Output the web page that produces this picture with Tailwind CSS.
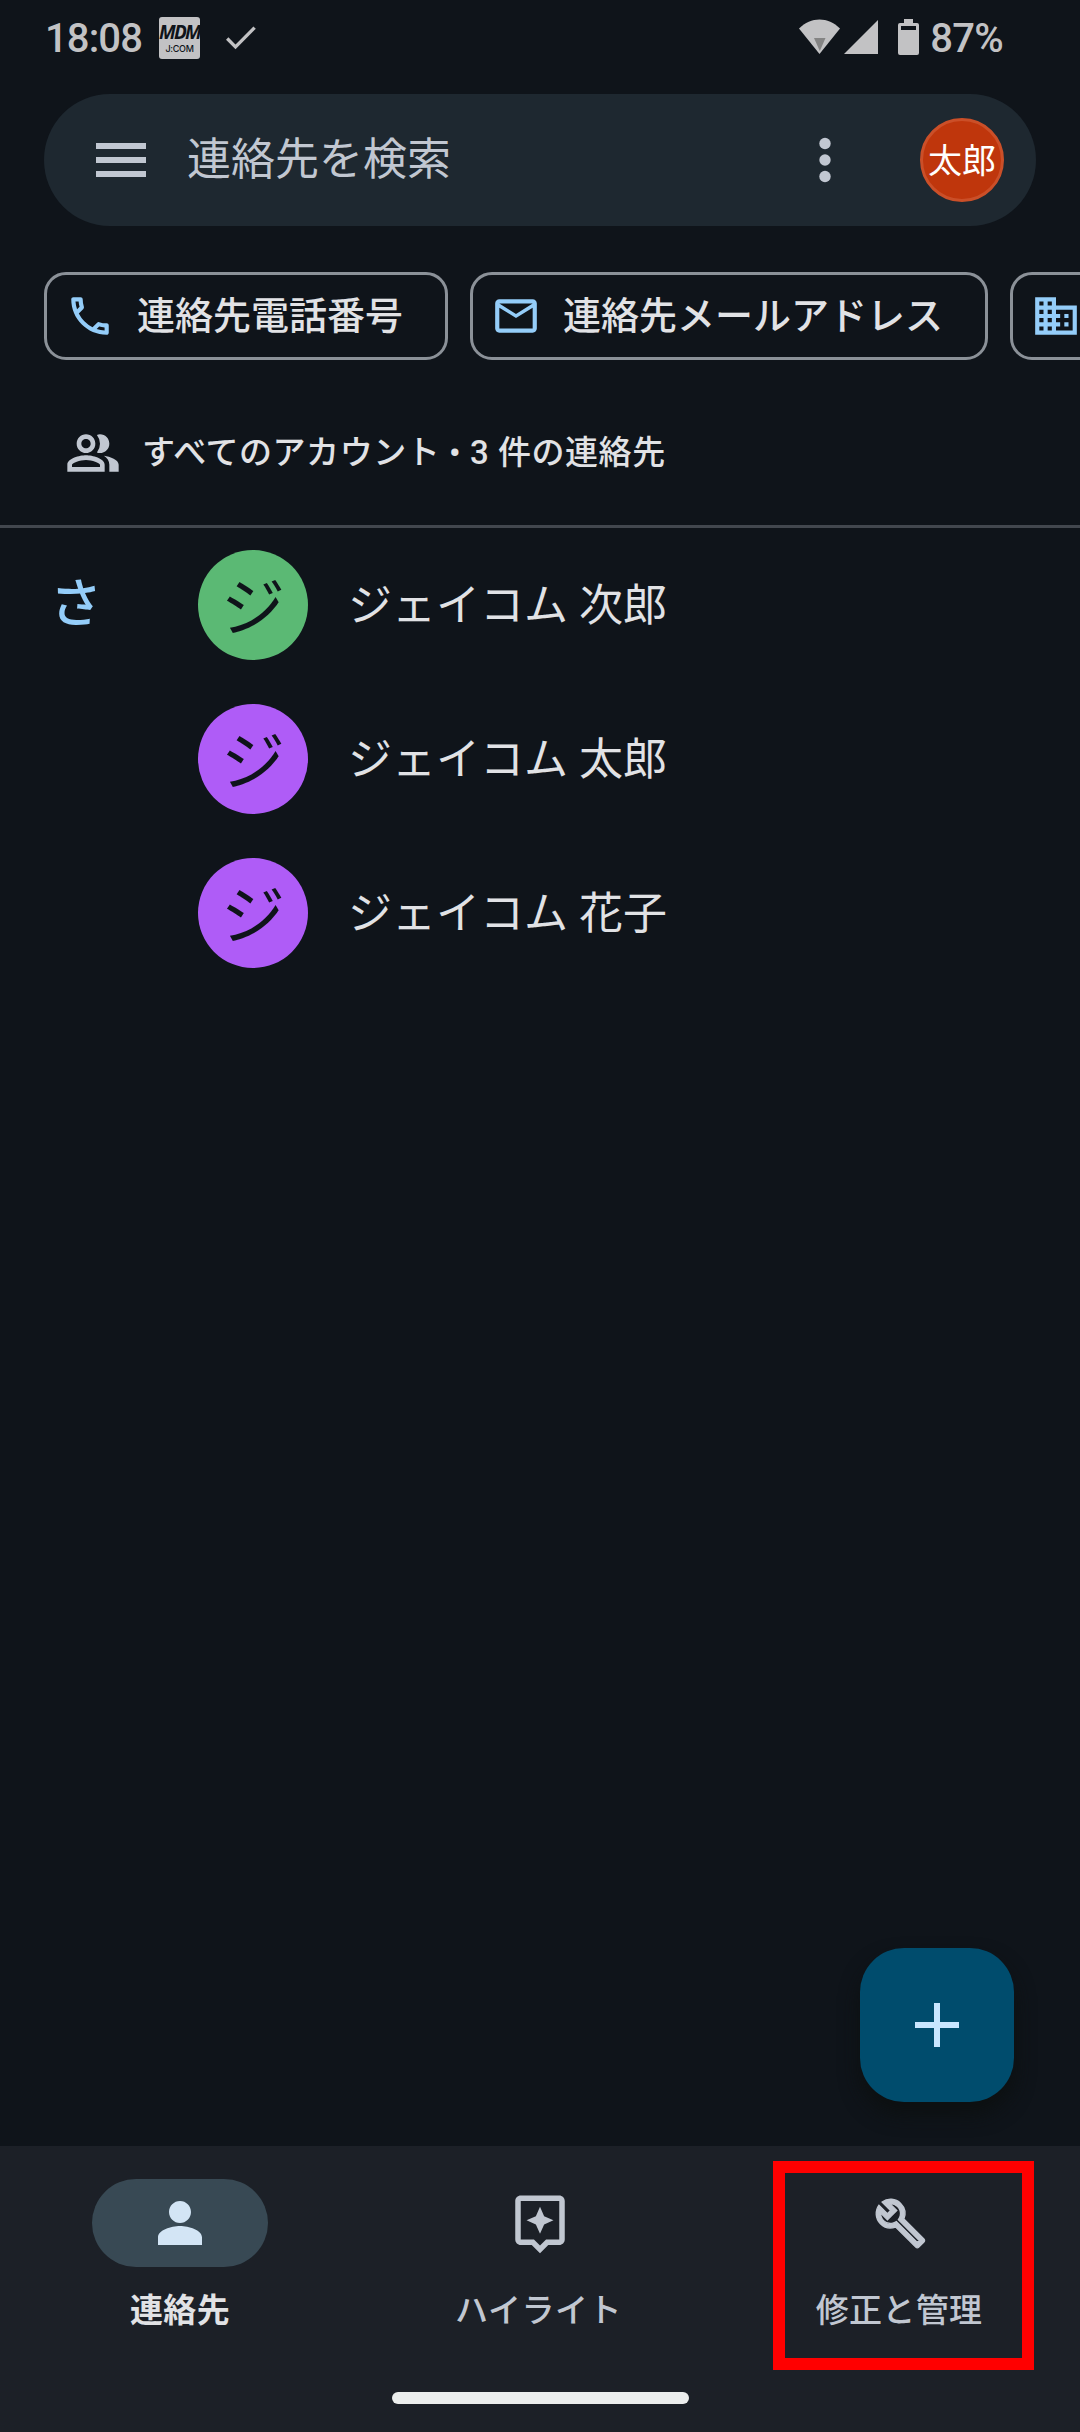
<!DOCTYPE html>
<html lang="ja">
<head>
  <meta charset="UTF-8">
  <meta name="viewport" content="width=device-width, initial-scale=1.0">
  <title>連絡先</title>
  <script src="https://cdn.jsdelivr.net/npm/@tailwindcss/browser@4"></script>
</head>
<body class="bg-[#0f141a] font-['Roboto','Noto_Sans_CJK_JP',sans-serif]">
  <div class="relative flex h-[2432px] w-[1080px] flex-col overflow-hidden whitespace-nowrap text-[#e1e2e5]">

    <!-- Status bar -->
    <header class="flex h-[94px] items-start justify-between pt-[17px] pr-[77px] pl-[45px] text-[#c2c2c4]">
      <div class="flex items-center">
        <span class="w-[114px] pt-px text-[40px] leading-[41px] font-medium tracking-[-0.9px]">18:08</span>
        <div class="flex h-[42px] w-[41px] flex-col items-center rounded-[3px] bg-[#c2c2c4] pt-[5px] text-[#0f141a]">
          <span class="font-['Open_Sans'] text-[19px] leading-[21px] font-bold tracking-[-1.8px] italic">MDM</span>
          <span class="font-['Inter'] text-[9px] leading-[11px] font-medium tracking-[-0.3px]">J:COM</span>
        </div>
        <svg class="ml-[26px] h-[24px] w-[30px]" viewBox="0 0 30 24" fill="none" stroke="currentColor" stroke-width="3.3"><path d="M1.2 12.5 9.5 20.8 28.6 1.7"/></svg>
      </div>
      <div class="flex items-start">
        <svg class="mt-[2px] h-[35px] w-[41px]" viewBox="0 0 41 35"><path fill="currentColor" d="M0 9.5C12 -2.5 29 -2.5 41 9.5L20.5 35Z"/><path fill="#848484" d="M15 19h11.5l-5.700 13Z"/></svg>
        <svg class="mt-[3px] ml-[4px] h-[34px] w-[34px]" viewBox="0 0 34 34"><path fill="currentColor" d="M34 0V34H0Z"/></svg>
        <svg class="mt-[2px] ml-[20px] h-[36px] w-[21px]" viewBox="0 0 21 36"><path fill="currentColor" fill-rule="evenodd" d="M6 0h9v4h4a2 2 0 0 1 2 2v28a2 2 0 0 1-2 2H2a2 2 0 0 1-2-2V6a2 2 0 0 1 2-2h4ZM3 7v4h15V7Z"/></svg>
        <span class="ml-[11px] pt-px text-[40px] leading-[41px] font-medium tracking-[-0.7px]">87%</span>
      </div>
    </header>

    <!-- Search bar -->
    <div class="mx-[44px] flex h-[132px] shrink-0 items-center rounded-full bg-[#1e2830] pr-[32px] pl-[52px] text-[#c1c7d1]">
      <svg class="h-[34px] w-[50px]" viewBox="0 0 50 34" fill="currentColor"><path d="M0 0h50v6H0zM0 14h50v6H0zM0 28h50v6H0z"/></svg>
      <span class="ml-[41px] flex-1 text-[44px] leading-[60px]">連絡先を検索</span>
      <svg class="mr-[89px] h-[46px] w-[12px]" viewBox="0 0 12 46" fill="currentColor"><circle cx="6" cy="6.500" r="5.700"/><circle cx="6" cy="23" r="5.700"/><circle cx="6" cy="39.500" r="5.700"/></svg>
      <div class="flex size-[84px] items-center justify-center rounded-full border-[3px] border-[#cb4f28] bg-[#bf360c] pt-[2px] text-[34px] text-white">太郎</div>
    </div>

    <!-- Filter chips -->
    <div class="mt-[46px] ml-[44px] flex shrink-0 gap-[22px] text-[38px] font-medium">
      <div class="flex h-[88px] w-[404px] shrink-0 items-center gap-[22px] rounded-[22px] border-3 border-[#8b9198] pl-[18px]">
        <svg class="size-[50px] shrink-0 text-[#94cdf9]" viewBox="0 0 24 24" fill="currentColor"><path d="M6.540 5c.06.89.21 1.760.45 2.590l-1.200 1.200c-.41-1.200-.67-2.470-.76-3.790h1.510m9.860 12.020c.85.24 1.720.39 2.600.45v1.490c-1.320-.09-2.590-.35-3.800-.75l1.200-1.190M7.500 3H4c-.55 0-1 .45-1 1 0 9.390 7.610 17 17 17 .55 0 1-.45 1-1v-3.490c0-.55-.45-1-1-1-1.240 0-2.450-.2-3.570-.57a.840.840 0 0 0-.31-.05c-.26 0-.51.1-.71.29l-2.200 2.200a15.150 15.150 0 0 1-6.590-6.590l2.200-2.200c.28-.28.36-.67.25-1.020A11.360 11.360 0 0 1 8.500 4c0-.55-.45-1-1-1z"/></svg>
        <span>連絡先電話番号</span>
      </div>
      <div class="flex h-[88px] w-[518px] shrink-0 items-center gap-[22px] rounded-[22px] border-3 border-[#8b9198] pl-[18px]">
        <svg class="size-[50px] shrink-0 text-[#94cdf9]" viewBox="0 0 24 24" fill="currentColor"><path d="M22 6c0-1.100-.9-2-2-2H4c-1.100 0-2 .9-2 2v12c0 1.100.9 2 2 2h16c1.100 0 2-.9 2-2V6zm-2 0-8 5-8-5h16zm0 12H4V8l8 5 8-5v10z"/></svg>
        <span>連絡先メールアドレス</span>
      </div>
      <div class="flex h-[88px] w-[404px] shrink-0 items-center gap-[22px] rounded-[22px] border-3 border-[#8b9198] pl-[18px]">
        <svg class="size-[50px] shrink-0 text-[#94cdf9]" viewBox="0 0 24 24" fill="currentColor"><path d="M12 7V3H2v18h20V7H12zM6 19H4v-2h2v2zm0-4H4v-2h2v2zm0-4H4V9h2v2zm0-4H4V5h2v2zm4 12H8v-2h2v2zm0-4H8v-2h2v2zm0-4H8V9h2v2zm0-4H8V5h2v2zm10 12h-8v-2h2v-2h-2v-2h2v-2h-2V9h8v10zm-2-8h-2v2h2v-2zm0 4h-2v2h2v-2z"/></svg>
      </div>
    </div>

    <!-- Account summary -->
    <div class="flex h-[168px] shrink-0 items-center border-b-[3px] border-[#42474e] pt-[20px] pl-[65px]">
      <svg class="size-[56px] text-[#c1c7d1]" viewBox="0 0 24 24" fill="currentColor"><path d="M16.670 13.130C18.040 14.060 19 15.320 19 17v3h4v-3c0-2.180-3.570-3.470-6.330-3.870zM15 12c2.210 0 4-1.790 4-4s-1.790-4-4-4c-.47 0-.91.1-1.330.24a5.980 5.980 0 0 1 0 7.520c.42.14.86.24 1.330.24zM9 12c2.210 0 4-1.790 4-4s-1.790-4-4-4-4 1.790-4 4 1.790 4 4 4zm0-6c1.100 0 2 .9 2 2s-.9 2-2 2-2-.9-2-2 .9-2 2-2zM9 13c-2.670 0-8 1.340-8 4v3h16v-3c0-2.660-5.330-4-8-4zm6 5H3v-.99C3.200 16.290 6.300 15 9 15s5.800 1.290 6 2v1z"/></svg>
      <span class="ml-[21px] text-[33px] font-medium tracking-[0.55px]">すべてのアカウント • 3 件の連絡先</span>
    </div>

    <!-- Contact list -->
    <main class="flex flex-1 flex-col text-[44px]">
      <div class="flex h-[154px] items-center">
        <span class="w-[198px] pl-[50px] text-[52px] font-medium text-[#94cdf9]">さ</span>
        <div class="flex size-[110px] items-center justify-center rounded-full bg-[#5bb974] pt-[7px] text-[64px] leading-none text-[#0f141a]">ジ</div>
        <span class="ml-[40px] pt-px">ジェイコム 次郎</span>
      </div>
      <div class="flex h-[154px] items-center pl-[198px]">
        <div class="flex size-[110px] items-center justify-center rounded-full bg-[#af5cf7] pt-[7px] text-[64px] leading-none text-[#0f141a]">ジ</div>
        <span class="ml-[40px] pt-px">ジェイコム 太郎</span>
      </div>
      <div class="flex h-[154px] items-center pl-[198px]">
        <div class="flex size-[110px] items-center justify-center rounded-full bg-[#af5cf7] pt-[7px] text-[64px] leading-none text-[#0f141a]">ジ</div>
        <span class="ml-[40px] pt-px">ジェイコム 花子</span>
      </div>
    </main>

    <!-- Add contact -->
    <button class="absolute top-[1948px] left-[860px] flex size-[154px] items-center justify-center rounded-[44px] bg-[#004c6d] shadow-[0_12px_20px_rgba(12,15,16,0.9)]">
      <svg class="size-[44px]" viewBox="0 0 44 44" fill="#c8e6ff"><path d="M19 0h6v19h19v6H25v19h-6V25H0v-6h19z"/></svg>
    </button>

    <!-- Bottom navigation -->
    <nav class="relative flex h-[286px] shrink-0 flex-col items-center bg-[#1c2027]">
      <div class="grid h-[246px] w-full grid-cols-3 pt-[33px] text-[33px] font-medium text-[#c1c7d1]">
        <div class="flex flex-col items-center">
          <div class="flex h-[88px] w-[176px] items-center justify-center rounded-full bg-[#384954]">
            <svg class="size-[66px] text-[#d3e5f5]" viewBox="0 0 24 24" fill="currentColor"><path d="M12 12c2.210 0 4-1.790 4-4s-1.790-4-4-4-4 1.790-4 4 1.790 4 4 4zm0 1.100c-3.200 0-8 1.500-8 4.100V20h16v-2.800c0-2.600-4.800-4.100-8-4.100z"/></svg>
          </div>
          <span class="mt-[20px] leading-[48px] font-bold tracking-[0.3px] text-[#e1e2e5]">連絡先</span>
        </div>
        <div class="flex flex-col items-center">
          <div class="flex h-[88px] w-[176px] items-center justify-center">
            <svg class="size-[66px]" viewBox="0 0 24 24" fill="currentColor"><path fill-rule="evenodd" d="M5 2h14c1.100 0 2 .9 2 2v14c0 1.100-.9 2-2 2h-4l-3 3-3-3H5c-1.100 0-2-.9-2-2V4c0-1.100.9-2 2-2zm0 2v14h4.800l2.200 2.200 2.200-2.200H19V4z"/><path d="m12 6.100 1.500 3.400L16.900 11l-3.400 1.500L12 15.900l-1.500-3.400L7.100 11l3.400-1.500z"/></svg>
          </div>
          <span class="mt-[20px] -ml-[3px] leading-[48px] tracking-[0.5px]">ハイライト</span>
        </div>
        <div class="flex flex-col items-center">
          <div class="flex h-[88px] w-[176px] items-center justify-center">
            <svg class="size-[53px]" viewBox="0 0 24 24" fill="currentColor" stroke="currentColor" stroke-width=".6"><path fill-rule="evenodd" d="M22.610 18.990l-9.080-9.080c.93-2.340.45-5.100-1.440-7C9.790.61 6.210.4 3.660 2.260L7.500 6.110 6.080 7.520 2.250 3.690C.39 6.230.6 9.820 2.900 12.110c1.860 1.860 4.570 2.350 6.890 1.480l9.110 9.110c.39.39 1.020.39 1.410 0l2.300-2.300c.4-.38.4-1.010 0-1.410zm-3 1.600l-9.460-9.460c-.61.45-1.290.72-2 .82-1.360.2-2.790-.21-3.830-1.250C3.370 9.760 2.930 8.500 3 7.260l3.090 3.090 4.240-4.240-3.090-3.090c1.240-.07 2.490.37 3.440 1.310 1.080 1.080 1.490 2.570 1.240 3.960-.12.71-.42 1.370-.88 1.960l9.450 9.450-.88.89z"/></svg>
          </div>
          <span class="mt-[20px] -ml-[2px] leading-[48px] tracking-[0.3px]">修正と管理</span>
        </div>
      </div>
      <div class="h-[12px] w-[297px] rounded-full bg-[#eceeed]"></div>
      <!-- Highlight frame -->
      <div class="absolute top-[15px] left-[773px] h-[209px] w-[261px] border-[12px] border-[#ff0000]"></div>
    </nav>
  </div>
</body>
</html>
